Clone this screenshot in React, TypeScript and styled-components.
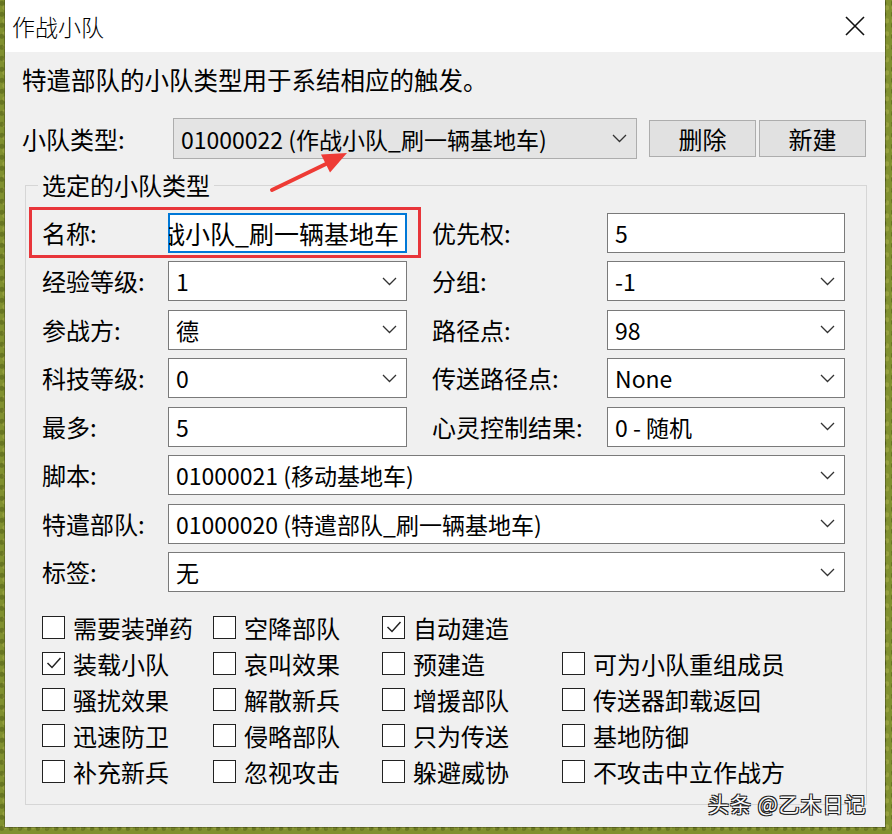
import React from 'react';
import styled, { createGlobalStyle } from 'styled-components';

const GlobalStyle = createGlobalStyle`
  html, body {
    margin: 0;
    padding: 0;
  }
  body {
    font-family: 'Noto Sans CJK SC', 'Noto Sans', sans-serif;
    color: #000;
  }
`;

const Backdrop = styled.div`
  width: 892px;
  height: 834px;
  box-sizing: border-box;
  padding-left: 5px;
  overflow: hidden;
  background:
    radial-gradient(circle at 20% 30%, rgba(60, 70, 10, 0.35) 0 2px, transparent 3px) 0 0 / 9px 11px,
    radial-gradient(circle at 70% 60%, rgba(190, 190, 90, 0.35) 0 2px, transparent 3px) 0 0 / 7px 13px,
    #80902f;
`;

const Window = styled.div`
  position: relative;
  width: 880px;
  height: 827px;
  background: #f0f0f0;
  display: flex;
  flex-direction: column;
  box-shadow: 0 0 0 1px rgba(0, 0, 0, 0.25);
`;

const TitleBar = styled.div`
  height: 52px;
  flex: none;
  background: #fff;
  display: flex;
  align-items: center;
  justify-content: space-between;
  padding: 0 19px 0 7px;
  font-size: 23px;
  font-weight: 300;
`;

const CloseButton = styled.div`
  width: 22px;
  height: 22px;
  display: flex;
`;

const Body = styled.div`
  padding: 0 17px;
  display: flex;
  flex-direction: column;
`;

const Description = styled.div`
  margin-top: 12px;
  font-size: 24.5px;
  line-height: 32px;
`;

const TypeRow = styled.div`
  margin-top: 22px;
  display: flex;
  align-items: center;
  height: 41px;
`;

const Label = styled.div<{ width: number; indent?: number }>`
  width: ${p => p.width}px;
  padding-left: ${p => p.indent || 0}px;
  flex: none;
  font-size: 24px;
  line-height: 40px;
  white-space: nowrap;
`;

const Field = styled.div<{ focused?: boolean; shaded?: boolean; span?: boolean; alignEnd?: boolean }>`
  box-sizing: border-box;
  height: 40px;
  display: flex;
  align-items: center;
  justify-content: ${p => (p.alignEnd ? 'flex-end' : 'space-between')};
  padding: 0 ${p => (p.alignEnd ? 7 : 9)}px 0 7px;
  font-size: ${p => (p.alignEnd ? 25 : 23)}px;
  white-space: nowrap;
  overflow: hidden;
  background: ${p => (p.shaded ? '#e4e4e4' : '#fff')};
  border: 1px solid ${p => (p.focused ? '#0078d7' : '#7a7a7a')};
  box-shadow: ${p => (p.focused ? 'inset 0 0 0 1px #0078d7' : 'none')};
  grid-column: ${p => (p.span ? '2 / 5' : 'auto')};
`;

const TypeCombo = styled(Field)`
  width: 464px;
  height: 41px;
  border-color: #adadad;
`;

const Button = styled.div<{ gap: number }>`
  box-sizing: border-box;
  width: 107px;
  height: 37px;
  margin-left: ${p => p.gap}px;
  background: #e1e1e1;
  border: 1px solid #adadad;
  display: flex;
  align-items: center;
  justify-content: center;
  font-size: 24px;
`;

const GroupBox = styled.fieldset`
  margin: 11px 0 0 3px;
  width: 842px;
  box-sizing: border-box;
  border: 1px solid #d6d6d6;
  padding: 13px 21px 15px 16px;
`;

const Legend = styled.legend`
  font-size: 24px;
  line-height: 30px;
  padding: 0 4px;
  margin-left: -4px;
`;

const FieldGrid = styled.div`
  display: grid;
  grid-template-columns: 126px 239px 200px 238px;
  grid-auto-rows: 40px;
  row-gap: 8.45px;
  align-items: center;
`;

const CheckGrid = styled.div`
  margin-top: 17px;
  display: grid;
  grid-template-columns: 171px 169px 180px 1fr;
  grid-auto-rows: 36px;
  align-items: center;
`;

const CheckItem = styled.div`
  display: flex;
  align-items: center;
  gap: 8px;
  font-size: 24px;
  white-space: nowrap;
`;

const Box = styled.div`
  width: 23px;
  height: 23px;
  box-sizing: border-box;
  border: 1.5px solid #222;
  background: #fff;
  display: flex;
  align-items: center;
  justify-content: center;
`;

const Highlight = styled.div`
  position: absolute;
  left: 24px;
  top: 207px;
  width: 392px;
  height: 51px;
  box-sizing: border-box;
  border: 3px solid #e8353a;
  pointer-events: none;
`;

const Arrow = styled.svg`
  position: absolute;
  left: 250px;
  top: 145px;
  pointer-events: none;
`;

const Watermark = styled.div`
  position: absolute;
  left: 703px;
  top: 788px;
  font-size: 21px;
  color: #fafafa;
  text-shadow: 1px 1px 0 #222, -1px -1px 0 #222, 1px -1px 0 #222, -1px 1px 0 #222;
  letter-spacing: 1px;
`;

function Chevron() {
  return (
    <svg width="15" height="9" viewBox="0 0 15 9">
      <polyline points="1,1 7.5,7.5 14,1" fill="none" stroke="#333" strokeWidth="1.3" />
    </svg>
  );
}

function Combo({ value, span }: { value: string; span?: boolean }) {
  return (
    <Field span={span}>
      <span>{value}</span>
      <Chevron />
    </Field>
  );
}

function Check({ label, checked }: { label: string; checked?: boolean }) {
  return (
    <CheckItem>
      <Box>
        {checked && (
          <svg width="16" height="14" viewBox="0 0 16 14">
            <polyline points="1.5,7 6,11.5 14.5,2" fill="none" stroke="#222" strokeWidth="1.5" />
          </svg>
        )}
      </Box>
      {label}
    </CheckItem>
  );
}

const checks: [string, boolean][] = [
  ['需要装弹药', false], ['空降部队', false], ['自动建造', true], ['', false],
  ['装载小队', true], ['哀叫效果', false], ['预建造', false], ['可为小队重组成员', false],
  ['骚扰效果', false], ['解散新兵', false], ['增援部队', false], ['传送器卸载返回', false],
  ['迅速防卫', false], ['侵略部队', false], ['只为传送', false], ['基地防御', false],
  ['补充新兵', false], ['忽视攻击', false], ['躲避威协', false], ['不攻击中立作战方', false],
];

export default function App() {
  return (
    <Backdrop>
      <GlobalStyle />
      <Window>
        <TitleBar>
          <span>作战小队</span>
          <CloseButton>
            <svg width="22" height="22" viewBox="0 0 22 22">
              <path d="M2 2 L20 20 M20 2 L2 20" stroke="#111" strokeWidth="1.6" />
            </svg>
          </CloseButton>
        </TitleBar>
        <Body>
          <Description>特遣部队的小队类型用于系结相应的触发。</Description>
          <TypeRow>
            <Label width={151}>小队类型:</Label>
            <TypeCombo shaded>
              <span>01000022 (作战小队_刷一辆基地车)</span>
              <Chevron />
            </TypeCombo>
            <Button gap={12}>删除</Button>
            <Button gap={3}>新建</Button>
          </TypeRow>
          <GroupBox>
            <Legend>选定的小队类型</Legend>
            <FieldGrid>
              <Label width={126}>名称:</Label>
              <Field focused alignEnd>
                <span>作战小队_刷一辆基地车</span>
              </Field>
              <Label width={175} indent={25}>优先权:</Label>
              <Field>5</Field>

              <Label width={126}>经验等级:</Label>
              <Combo value="1" />
              <Label width={175} indent={25}>分组:</Label>
              <Combo value="-1" />

              <Label width={126}>参战方:</Label>
              <Combo value="德" />
              <Label width={175} indent={25}>路径点:</Label>
              <Combo value="98" />

              <Label width={126}>科技等级:</Label>
              <Combo value="0" />
              <Label width={175} indent={25}>传送路径点:</Label>
              <Combo value="None" />

              <Label width={126}>最多:</Label>
              <Field>5</Field>
              <Label width={175} indent={25}>心灵控制结果:</Label>
              <Combo value="0 - 随机" />

              <Label width={126}>脚本:</Label>
              <Combo span value="01000021 (移动基地车)" />

              <Label width={126}>特遣部队:</Label>
              <Combo span value="01000020 (特遣部队_刷一辆基地车)" />

              <Label width={126}>标签:</Label>
              <Combo span value="无" />
            </FieldGrid>
            <CheckGrid>
              {checks.map(([label, checked], i) =>
                label ? <Check key={i} label={label} checked={checked} /> : <span key={i} />
              )}
            </CheckGrid>
          </GroupBox>
        </Body>
        <Highlight />
        <Arrow width="100" height="55" viewBox="0 0 100 55">
          <line x1="17" y1="45" x2="73" y2="18" stroke="#ee3b35" strokeWidth="4" strokeLinecap="round" />
          <polygon points="92,8 66,9.6 75,27.6" fill="#ee3b35" />
        </Arrow>
        <Watermark>头条 @乙木日记</Watermark>
      </Window>
    </Backdrop>
  );
}
